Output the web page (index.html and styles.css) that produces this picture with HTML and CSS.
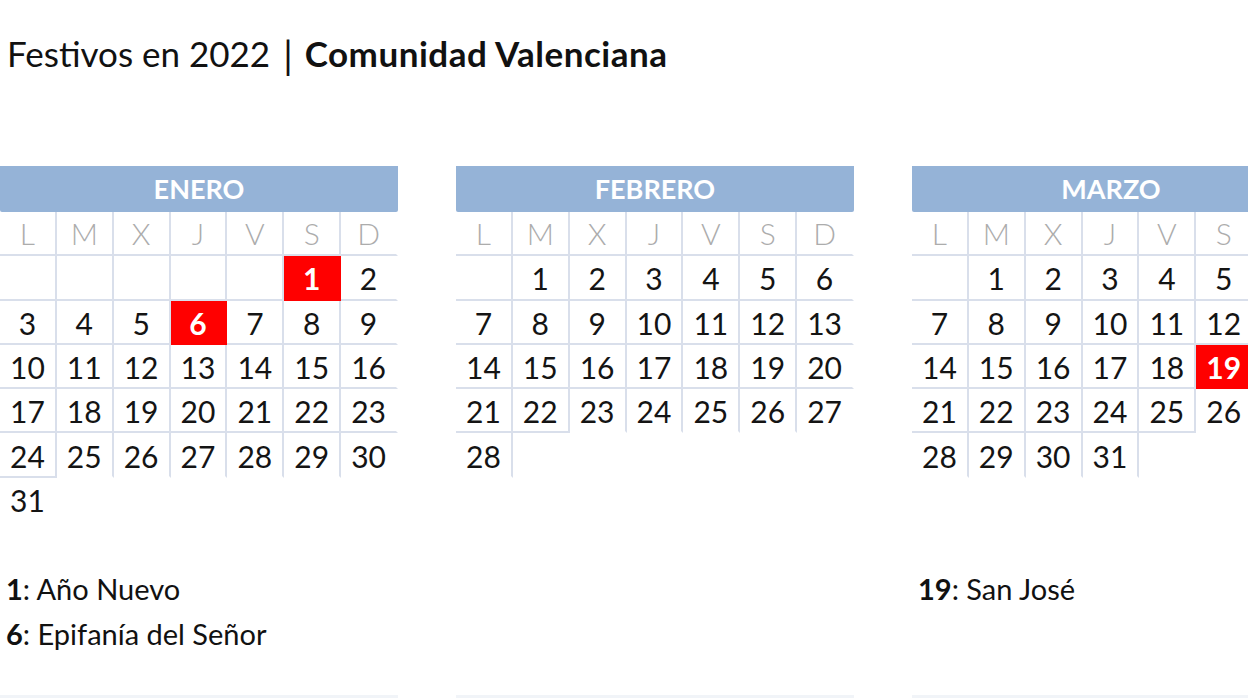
FILE: index.html
```html
<!DOCTYPE html>
<html lang="es">
<head>
<meta charset="utf-8">
<title>Festivos en 2022 | Comunidad Valenciana</title>
<link rel="stylesheet" href="styles.css">
</head>
<body>
<div class="page">
  <h1 class="title">Festivos en 2022<span class="sep">|</span><b>Comunidad Valenciana</b></h1>

  <div class="months">
    <section class="month">
      <div class="month-name">ENERO</div>
      <div class="grid">
        <div class="c dow">L</div><div class="c dow">M</div><div class="c dow">X</div><div class="c dow">J</div><div class="c dow">V</div><div class="c dow">S</div><div class="c dow nr">D</div>
        <div class="c"></div><div class="c"></div><div class="c"></div><div class="c"></div><div class="c"></div><div class="c hol">1</div><div class="c nr">2</div>
        <div class="c">3</div><div class="c">4</div><div class="c">5</div><div class="c hol">6</div><div class="c">7</div><div class="c">8</div><div class="c nr">9</div>
        <div class="c">10</div><div class="c">11</div><div class="c">12</div><div class="c">13</div><div class="c">14</div><div class="c">15</div><div class="c nr">16</div>
        <div class="c">17</div><div class="c">18</div><div class="c">19</div><div class="c">20</div><div class="c">21</div><div class="c">22</div><div class="c nr">23</div>
        <div class="c">24</div><div class="c nb">25</div><div class="c nb">26</div><div class="c nb">27</div><div class="c nb">28</div><div class="c nb">29</div><div class="c nr nb">30</div>
        <div class="c nr nb">31</div>
      </div>
      <div class="legend">
        <p><b>1</b>: Año Nuevo</p>
        <p><b>6</b>: Epifanía del Señor</p>
      </div>
    </section>

    <section class="month">
      <div class="month-name">FEBRERO</div>
      <div class="grid">
        <div class="c dow">L</div><div class="c dow">M</div><div class="c dow">X</div><div class="c dow">J</div><div class="c dow">V</div><div class="c dow">S</div><div class="c dow nr">D</div>
        <div class="c"></div><div class="c">1</div><div class="c">2</div><div class="c">3</div><div class="c">4</div><div class="c">5</div><div class="c nr">6</div>
        <div class="c">7</div><div class="c">8</div><div class="c">9</div><div class="c">10</div><div class="c">11</div><div class="c">12</div><div class="c nr">13</div>
        <div class="c">14</div><div class="c">15</div><div class="c">16</div><div class="c">17</div><div class="c">18</div><div class="c">19</div><div class="c nr">20</div>
        <div class="c">21</div><div class="c">22</div><div class="c nb">23</div><div class="c nb">24</div><div class="c nb">25</div><div class="c nb">26</div><div class="c nr nb">27</div>
        <div class="c nb">28</div><div class="c nr nb"></div>
      </div>
      <div class="legend"></div>
    </section>

    <section class="month">
      <div class="month-name">MARZO</div>
      <div class="grid">
        <div class="c dow">L</div><div class="c dow">M</div><div class="c dow">X</div><div class="c dow">J</div><div class="c dow">V</div><div class="c dow">S</div><div class="c dow nr">D</div>
        <div class="c"></div><div class="c">1</div><div class="c">2</div><div class="c">3</div><div class="c">4</div><div class="c">5</div><div class="c nr">6</div>
        <div class="c">7</div><div class="c">8</div><div class="c">9</div><div class="c">10</div><div class="c">11</div><div class="c">12</div><div class="c nr">13</div>
        <div class="c">14</div><div class="c">15</div><div class="c">16</div><div class="c">17</div><div class="c">18</div><div class="c hol">19</div><div class="c nr">20</div>
        <div class="c">21</div><div class="c">22</div><div class="c">23</div><div class="c">24</div><div class="c">25</div><div class="c nb">26</div><div class="c nr nb">27</div>
        <div class="c nb">28</div><div class="c nb">29</div><div class="c nb">30</div><div class="c nb">31</div><div class="c nr nb"></div>
      </div>
      <div class="legend">
        <p><b>19</b>: San José</p>
      </div>
    </section>
  </div>

  <div class="next-row">
    <div class="next-bar"></div>
    <div class="next-bar"></div>
    <div class="next-bar"></div>
  </div>
</div>
</body>
</html>
```

FILE: styles.css
```css
html, body {
  margin: 0;
  padding: 0;
  background: #ffffff;
  overflow: hidden;
}

body {
  width: 1248px;
  height: 698px;
  font-family: "Lato", "Open Sans", "Liberation Sans", sans-serif;
  color: #141414;
}

.page {
  width: 1400px;
}

.title {
  margin: 0;
  padding: 32px 0 0 7px;
  height: 40px;
  font-size: 35px;
  line-height: 40px;
  font-weight: 400;
  color: #111;
  white-space: nowrap;
}

.title .sep {
  display: inline-block;
  margin: 0 12px 0 13px;
  font-size: 38px;
  transform: translateY(2px);
}

.title b {
  font-weight: 700;
  letter-spacing: 0.5px;
}

.months {
  display: flex;
  gap: 58px;
  margin-top: 94px;
}

.month {
  width: 398px;
  flex: none;
}

.month-name {
  height: 46px;
  line-height: 46px;
  background: #95b3d7;
  border-radius: 0 0 2px 2px;
  color: #ffffff;
  font-weight: 700;
  font-size: 27px;
  text-align: center;
}

.grid {
  display: grid;
  grid-template-columns: repeat(7, 1fr);
  grid-template-rows: repeat(7, 44.3px);
}

.c {
  box-sizing: border-box;
  border-right: 2px solid #d9dfeb;
  border-bottom: 2px solid #d9dfeb;
  display: flex;
  align-items: center;
  justify-content: center;
  font-size: 30px;
  padding-top: 2px;
  color: #141414;
}

.c.nr {
  border-right-color: transparent;
}

.c.nb {
  border-bottom-color: transparent;
}

.c.dow {
  color: #acacac;
  font-weight: 300;
  padding-top: 0;
}

.c.hol {
  background: #ff0000;
  border-color: #ff0000;
  color: #ffffff;
  font-weight: 700;
}

.legend {
  margin-top: 44.3px;
  height: 88.6px;
  padding-left: 6px;
}

.legend p {
  margin: 0;
  height: 44.3px;
  line-height: 46px;
  font-size: 29px;
  color: #111;
  white-space: nowrap;
}

.legend b {
  font-weight: 700;
}

.next-row {
  display: flex;
  gap: 58px;
  margin-top: 40px;
}

.next-bar {
  width: 398px;
  height: 3px;
  flex: none;
  background: #f1f4f8;
}
```
